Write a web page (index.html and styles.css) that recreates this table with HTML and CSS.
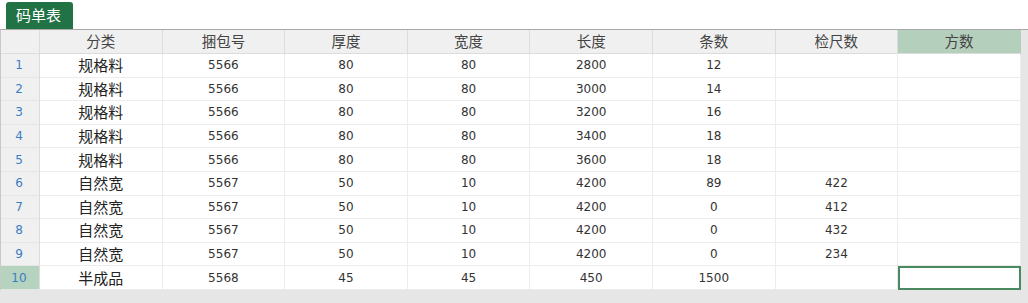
FILE: index.html
```html
<!DOCTYPE html>
<html lang="zh">
<head>
<meta charset="utf-8">
<link rel="stylesheet" href="styles.css">
</head>
<body>
<div class="tabbar"><div class="tab">码单表</div></div>
<div class="frame">
  <div class="sheet">
    <div class="hd corner"></div>
    <div class="hd">分类</div><div class="hd">捆包号</div><div class="hd">厚度</div><div class="hd">宽度</div><div class="hd">长度</div><div class="hd">条数</div><div class="hd">检尺数</div><div class="hd active">方数</div>

    <div class="rn">1</div><div class="c zh">规格料</div><div class="c">5566</div><div class="c">80</div><div class="c">80</div><div class="c">2800</div><div class="c">12</div><div class="c"></div><div class="c"></div>
    <div class="rn">2</div><div class="c zh">规格料</div><div class="c">5566</div><div class="c">80</div><div class="c">80</div><div class="c">3000</div><div class="c">14</div><div class="c"></div><div class="c"></div>
    <div class="rn">3</div><div class="c zh">规格料</div><div class="c">5566</div><div class="c">80</div><div class="c">80</div><div class="c">3200</div><div class="c">16</div><div class="c"></div><div class="c"></div>
    <div class="rn">4</div><div class="c zh">规格料</div><div class="c">5566</div><div class="c">80</div><div class="c">80</div><div class="c">3400</div><div class="c">18</div><div class="c"></div><div class="c"></div>
    <div class="rn">5</div><div class="c zh">规格料</div><div class="c">5566</div><div class="c">80</div><div class="c">80</div><div class="c">3600</div><div class="c">18</div><div class="c"></div><div class="c"></div>
    <div class="rn">6</div><div class="c zh">自然宽</div><div class="c">5567</div><div class="c">50</div><div class="c">10</div><div class="c">4200</div><div class="c">89</div><div class="c">422</div><div class="c"></div>
    <div class="rn">7</div><div class="c zh">自然宽</div><div class="c">5567</div><div class="c">50</div><div class="c">10</div><div class="c">4200</div><div class="c">0</div><div class="c">412</div><div class="c"></div>
    <div class="rn">8</div><div class="c zh">自然宽</div><div class="c">5567</div><div class="c">50</div><div class="c">10</div><div class="c">4200</div><div class="c">0</div><div class="c">432</div><div class="c"></div>
    <div class="rn">9</div><div class="c zh">自然宽</div><div class="c">5567</div><div class="c">50</div><div class="c">10</div><div class="c">4200</div><div class="c">0</div><div class="c">234</div><div class="c"></div>
    <div class="rn active">10</div><div class="c zh">半成品</div><div class="c">5568</div><div class="c">45</div><div class="c">45</div><div class="c">450</div><div class="c">1500</div><div class="c"></div><div class="c selected"></div>
  </div>
  <div class="vscroll"></div>
</div>
<div class="hscroll"></div>
</body>
</html>
```

FILE: styles.css
```css
html, body {
  margin: 0;
  padding: 0;
  background: #ffffff;
  font-family: "DejaVu Sans", "Noto Sans CJK SC", sans-serif;
}
.tabbar {
  height: 29px;
  padding: 2px 0 0 6px;
  box-sizing: border-box;
  display: flex;
  align-items: flex-end;
}
.tab {
  width: 67px;
  height: 27px;
  background: #217346;
  color: #ffffff;
  border-radius: 3px 3px 0 0;
  font-family: "Noto Sans CJK SC", sans-serif;
  font-size: 15px;
  line-height: 26px;
  padding-left: 10px;
  box-sizing: border-box;
}
.frame {
  display: flex;
  border-top: 1px solid #a9a9a9;
  border-left: 1px solid #c8c8c8;
  box-sizing: border-box;
}
.sheet {
  display: grid;
  grid-template-columns: 39px repeat(8, 122.6px);
  grid-template-rows: 24px repeat(10, 23.6px);
}
.vscroll {
  flex: 1;
  background: #e6e6e7;
}
.hscroll {
  height: 13px;
  background: #e6e6e7;
}
.hd {
  background: #f0f0f0;
  border-right: 1px solid #dcdcdc;
  border-bottom: 1px solid #dcdcdc;
  color: #444;
  font-family: "Noto Sans CJK SC", sans-serif;
  font-size: 14.5px;
  display: flex;
  align-items: center;
  justify-content: center;
  padding-bottom: 2px;
  box-sizing: border-box;
}
.hd.active {
  background: #b4d0bd;
  border-right-color: #b4d0bd;
}
.rn {
  background: #f0f0f0;
  border-right: 1px solid #dcdcdc;
  border-bottom: 1px solid #e6e6e6;
  color: #3b7cc3;
  font-size: 12px;
  display: flex;
  align-items: center;
  justify-content: center;
  box-sizing: border-box;
  padding-right: 2px;
}
.rn.active {
  background: #b6d3c0;
}
.c {
  border-right: 1px solid #ececec;
  border-bottom: 1px solid #ececec;
  color: #333;
  font-size: 12px;
  display: flex;
  align-items: center;
  justify-content: center;
  box-sizing: border-box;
}
.c.zh {
  font-family: "Noto Sans CJK SC", sans-serif;
  font-size: 15px;
  color: #222;
  padding-bottom: 1px;
}
.c.selected {
  border: 2px solid #4a8a61;
}
```
